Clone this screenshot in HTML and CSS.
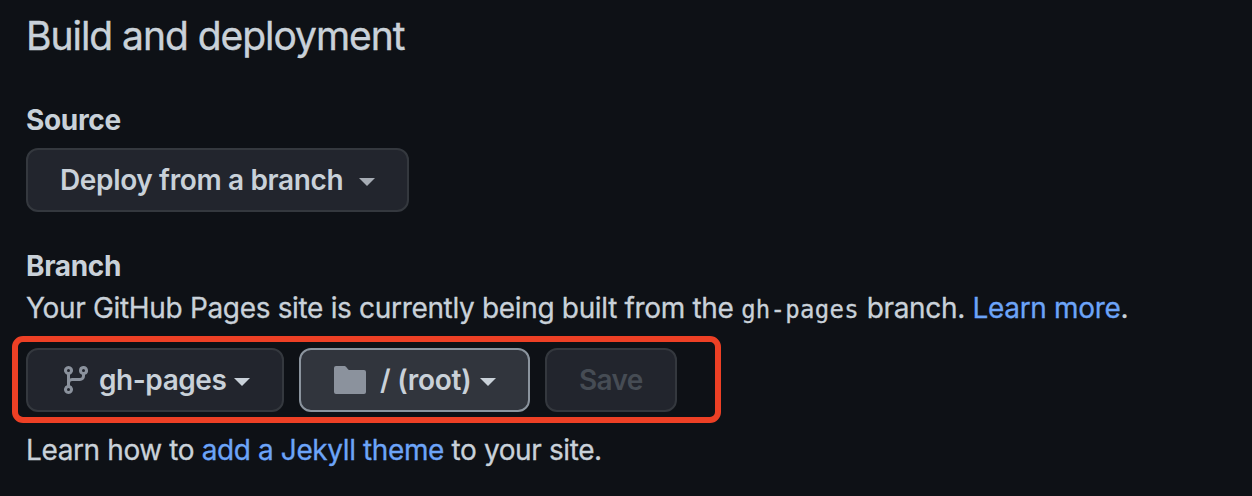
FILE: index.html
```html
<!DOCTYPE html>
<html lang="en">
<head>
<meta charset="utf-8">
<title>Build and deployment</title>
<link rel="stylesheet" href="styles.css">
</head>
<body>
<main class="settings">
  <h2 class="title"><span>Build and deployment</span></h2>
  <h4 class="label label-source"><span>Source</span></h4>
  <button class="btn btn-source"><span class="t-source">Deploy from a branch</span><i class="caret"></i></button>
  <h4 class="label label-branch"><span>Branch</span></h4>
  <p class="text"><span class="t-status">Your GitHub Pages site is currently being built from the </span><code>gh-pages</code><span class="t-tail"> branch. <a>Learn more</a>.</span></p>
  <div class="controls">
    <button class="btn btn-branch">
      <svg class="icon" viewBox="0 0 16 16"><path fill-rule="evenodd" d="M11.75 2.5a.75.75 0 100 1.5.75.75 0 000-1.5zm-2.25.75a2.25 2.25 0 113 2.122V6A2.5 2.5 0 0110 8.5H6a1 1 0 00-1 1v1.128a2.251 2.251 0 11-1.5 0V5.372a2.25 2.25 0 111.5 0v1.836A2.492 2.492 0 016 7h4a1 1 0 001-1v-.628A2.25 2.25 0 019.5 3.25zM4.25 12a.75.75 0 100 1.5.75.75 0 000-1.5zM3.5 3.25a.75.75 0 111.5 0 .75.75 0 01-1.5 0z"/></svg>
      <span class="t-branch">gh-pages</span><i class="caret"></i>
    </button>
    <button class="btn btn-folder">
      <svg class="icon" viewBox="0 0 16 16"><path d="M1 1A1 1 0 000 2v12a1 1 0 001 1h14a1 1 0 001-1V4a1 1 0 00-1-1H7.5a.5.5 0 01-.4-.2l-.9-1.2c-.33-.44-.7-.6-1.2-.6z"/></svg>
      <span class="t-folder">/ (root)</span><i class="caret"></i>
    </button>
    <button class="btn btn-save" disabled><span class="t-save">Save</span></button>
  </div>
  <p class="text text-theme"><span>Learn how to <a>add a Jekyll theme</a> to your site.</span></p>
</main>
</body>
</html>
```
FILE: styles.css
```css
* { box-sizing: border-box; }
body {
  margin: 0;
  background: #0e1116;
  color: #c9d1d9;
  font-family: Inter, "Liberation Sans", sans-serif;
  font-size: 28px;
  line-height: 42px;
  overflow: hidden;
}
.settings { padding: 6px 26px 0; }
h2, h4, p { margin: 0; white-space: nowrap; }
.title { font-size: 39px; font-weight: 400; line-height: 60px; letter-spacing: -1.04px; -webkit-text-stroke: 0.4px currentColor; }
.label { font-size: 28px; font-weight: 700; letter-spacing: -0.35px; }
.label-source { margin-top: 33px; padding-bottom: 7px; }
.label-branch { margin-top: 33px; }
.text { font-weight: 400; letter-spacing: -0.33px; -webkit-text-stroke: 0.3px currentColor; }
.btn {
  display: flex;
  align-items: center;
  height: 64px;
  padding: 0 32px;
  border: 2px solid #34383e;
  border-radius: 12px;
  background: #22252d;
  color: #c9d1d9;
  font: 600 28px/42px Inter, "Liberation Sans", sans-serif;
  white-space: nowrap;
}
.btn-source { width: 383px; }
.caret {
  flex: none;
  border: 8px solid transparent;
  border-top-color: currentColor;
  border-bottom: 0;
}
.btn-source .caret { margin: 3px 0 0 auto; color: #a6acb4; }
.controls { position: relative; display: flex; gap: 15px; width: max-content; margin-top: 19px; }
/* Highlight frame drawn around the branch controls */
.controls::after {
  content: "";
  position: absolute;
  inset: -12px -44px -11px -14px;
  border: 6px solid #ed4025;
  border-radius: 11px;
  pointer-events: none;
}
.icon { flex: none; width: 32px; height: 32px; fill: #8b929d; }
.controls .caret { margin: 3px 0 0 auto; }
.btn-branch { width: 258px; }
.btn-branch .t-branch { margin-left: 7px; }
.btn-folder { width: 231px; padding-left: 33px; background: #31353d; border-color: #8b949e; }
.btn-folder .t-folder { margin-left: 14px; letter-spacing: -0.25px; }
.btn-save { width: 132px; color: #464c54; }
.t-source { letter-spacing: -0.36px; }
.t-branch { letter-spacing: -0.45px; }
.t-save { letter-spacing: -0.7px; }
code { font: 24px/1 "DejaVu Sans Mono", monospace; letter-spacing: 0.3px; }
a { color: #6ca4f8; -webkit-text-stroke-color: #6ca4f8; }
.text-theme { margin-top: 17px; letter-spacing: -0.39px; }
```
